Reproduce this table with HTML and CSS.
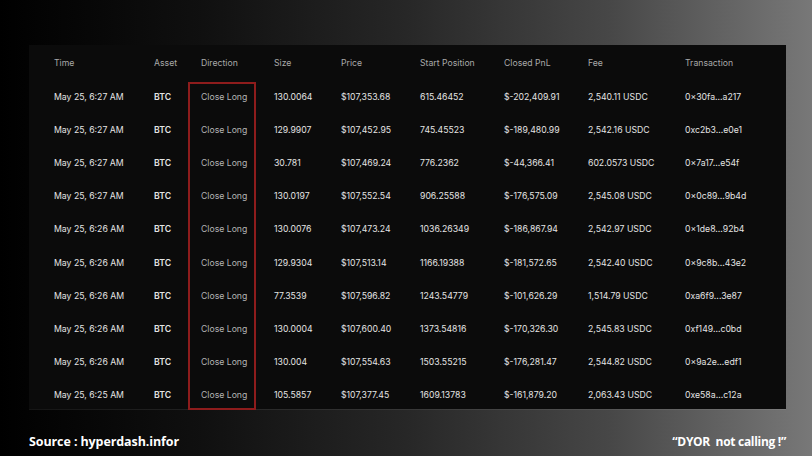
FILE: index.html
```html
<!DOCTYPE html>
<html>
<head>
<meta charset="utf-8">
<link rel="stylesheet" href="styles.css">
</head>
<body>
<div class="page">
  <div class="panel">
    <div class="grid">
      <div class="row head">
        <span>Time</span><span>Asset</span><span>Direction</span><span>Size</span><span>Price</span><span>Start Position</span><span>Closed PnL</span><span>Fee</span><span>Transaction</span>
      </div>
      <div class="row"><span>May 25, 6:27 AM</span><span class="asset">BTC</span><span class="dir">Close Long</span><span>130.0064</span><span>$107,353.68</span><span>615.46452</span><span>$-202,409.91</span><span>2,540.11 USDC</span><span>0×30fa...a217</span></div>
      <div class="row"><span>May 25, 6:27 AM</span><span class="asset">BTC</span><span class="dir">Close Long</span><span>129.9907</span><span>$107,452.95</span><span>745.45523</span><span>$-189,480.99</span><span>2,542.16 USDC</span><span>0xc2b3...e0e1</span></div>
      <div class="row"><span>May 25, 6:27 AM</span><span class="asset">BTC</span><span class="dir">Close Long</span><span>30.781</span><span>$107,469.24</span><span>776.2362</span><span>$-44,366.41</span><span>602.0573 USDC</span><span>0×7a17...e54f</span></div>
      <div class="row"><span>May 25, 6:27 AM</span><span class="asset">BTC</span><span class="dir">Close Long</span><span>130.0197</span><span>$107,552.54</span><span>906.25588</span><span>$-176,575.09</span><span>2,545.08 USDC</span><span>0×0c89...9b4d</span></div>
      <div class="row"><span>May 25, 6:26 AM</span><span class="asset">BTC</span><span class="dir">Close Long</span><span>130.0076</span><span>$107,473.24</span><span>1036.26349</span><span>$-186,867.94</span><span>2,542.97 USDC</span><span>0×1de8...92b4</span></div>
      <div class="row"><span>May 25, 6:26 AM</span><span class="asset">BTC</span><span class="dir">Close Long</span><span>129.9304</span><span>$107,513.14</span><span>1166.19388</span><span>$-181,572.65</span><span>2,542.40 USDC</span><span>0×9c8b...43e2</span></div>
      <div class="row"><span>May 25, 6:26 AM</span><span class="asset">BTC</span><span class="dir">Close Long</span><span>77.3539</span><span>$107,596.82</span><span>1243.54779</span><span>$-101,626.29</span><span>1,514.79 USDC</span><span>0xa6f9...3e87</span></div>
      <div class="row"><span>May 25, 6:26 AM</span><span class="asset">BTC</span><span class="dir">Close Long</span><span>130.0004</span><span>$107,600.40</span><span>1373.54816</span><span>$-170,326.30</span><span>2,545.83 USDC</span><span>0xf149...c0bd</span></div>
      <div class="row"><span>May 25, 6:26 AM</span><span class="asset">BTC</span><span class="dir">Close Long</span><span>130.004</span><span>$107,554.63</span><span>1503.55215</span><span>$-176,281.47</span><span>2,544.82 USDC</span><span>0×9a2e...edf1</span></div>
      <div class="row"><span>May 25, 6:25 AM</span><span class="asset">BTC</span><span class="dir">Close Long</span><span>105.5857</span><span>$107,377.45</span><span>1609.13783</span><span>$-161,879.20</span><span>2,063.43 USDC</span><span>0xe58a...c12a</span></div>
    </div>
    <div class="highlight"></div>
  </div>
  <div class="footer">
    <span class="source">Source : hyperdash.infor</span>
    <span class="quote">“DYOR&nbsp; not calling !”</span>
  </div>
</div>
</body>
</html>
```

FILE: styles.css
```css
html, body {
  margin: 0;
  padding: 0;
}
body {
  width: 812px;
  height: 456px;
  overflow: hidden;
  background: linear-gradient(to right, #000 0%, #101010 25%, #272727 50%, #474747 75%, #787878 100%);
}
.page {
  display: flex;
  flex-direction: column;
  padding: 45px 26px 0 29px;
}
.panel {
  position: relative;
  background: #0b0b0b;
  height: 364px;
  box-shadow: 0 1px 0 rgba(255,255,255,0.08);
}
.grid {
  display: flex;
  flex-direction: column;
  padding-left: 25px;
}
.row {
  display: grid;
  grid-template-columns: 100px 47px 73px 67px 79px 84px 84px 97px 101px;
  height: 33.2px;
  align-items: center;
  font-family: "Inter", "Liberation Sans", sans-serif;
  font-size: 8.7px;
  color: #e4e4e4;
  white-space: nowrap;
}
.row.head {
  height: 35px;
  padding-top: 1px;
  box-sizing: border-box;
  color: #a9a9a9;
}
.asset {
  font-weight: 600;
}
.dir {
  color: #b4b4b4;
}
.highlight {
  position: absolute;
  left: 159px;
  top: 37px;
  width: 64px;
  height: 324px;
  border: 2px solid #8e1c1c;
}
.footer {
  display: flex;
  justify-content: space-between;
  align-items: center;
  height: 64px;
  font-family: "Open Sans", sans-serif;
  font-weight: 700;
  color: #fff;
}
.source {
  font-size: 12.5px;
  letter-spacing: -0.1px;
}
.quote {
  font-size: 12px;
  letter-spacing: -0.3px;
}
```
